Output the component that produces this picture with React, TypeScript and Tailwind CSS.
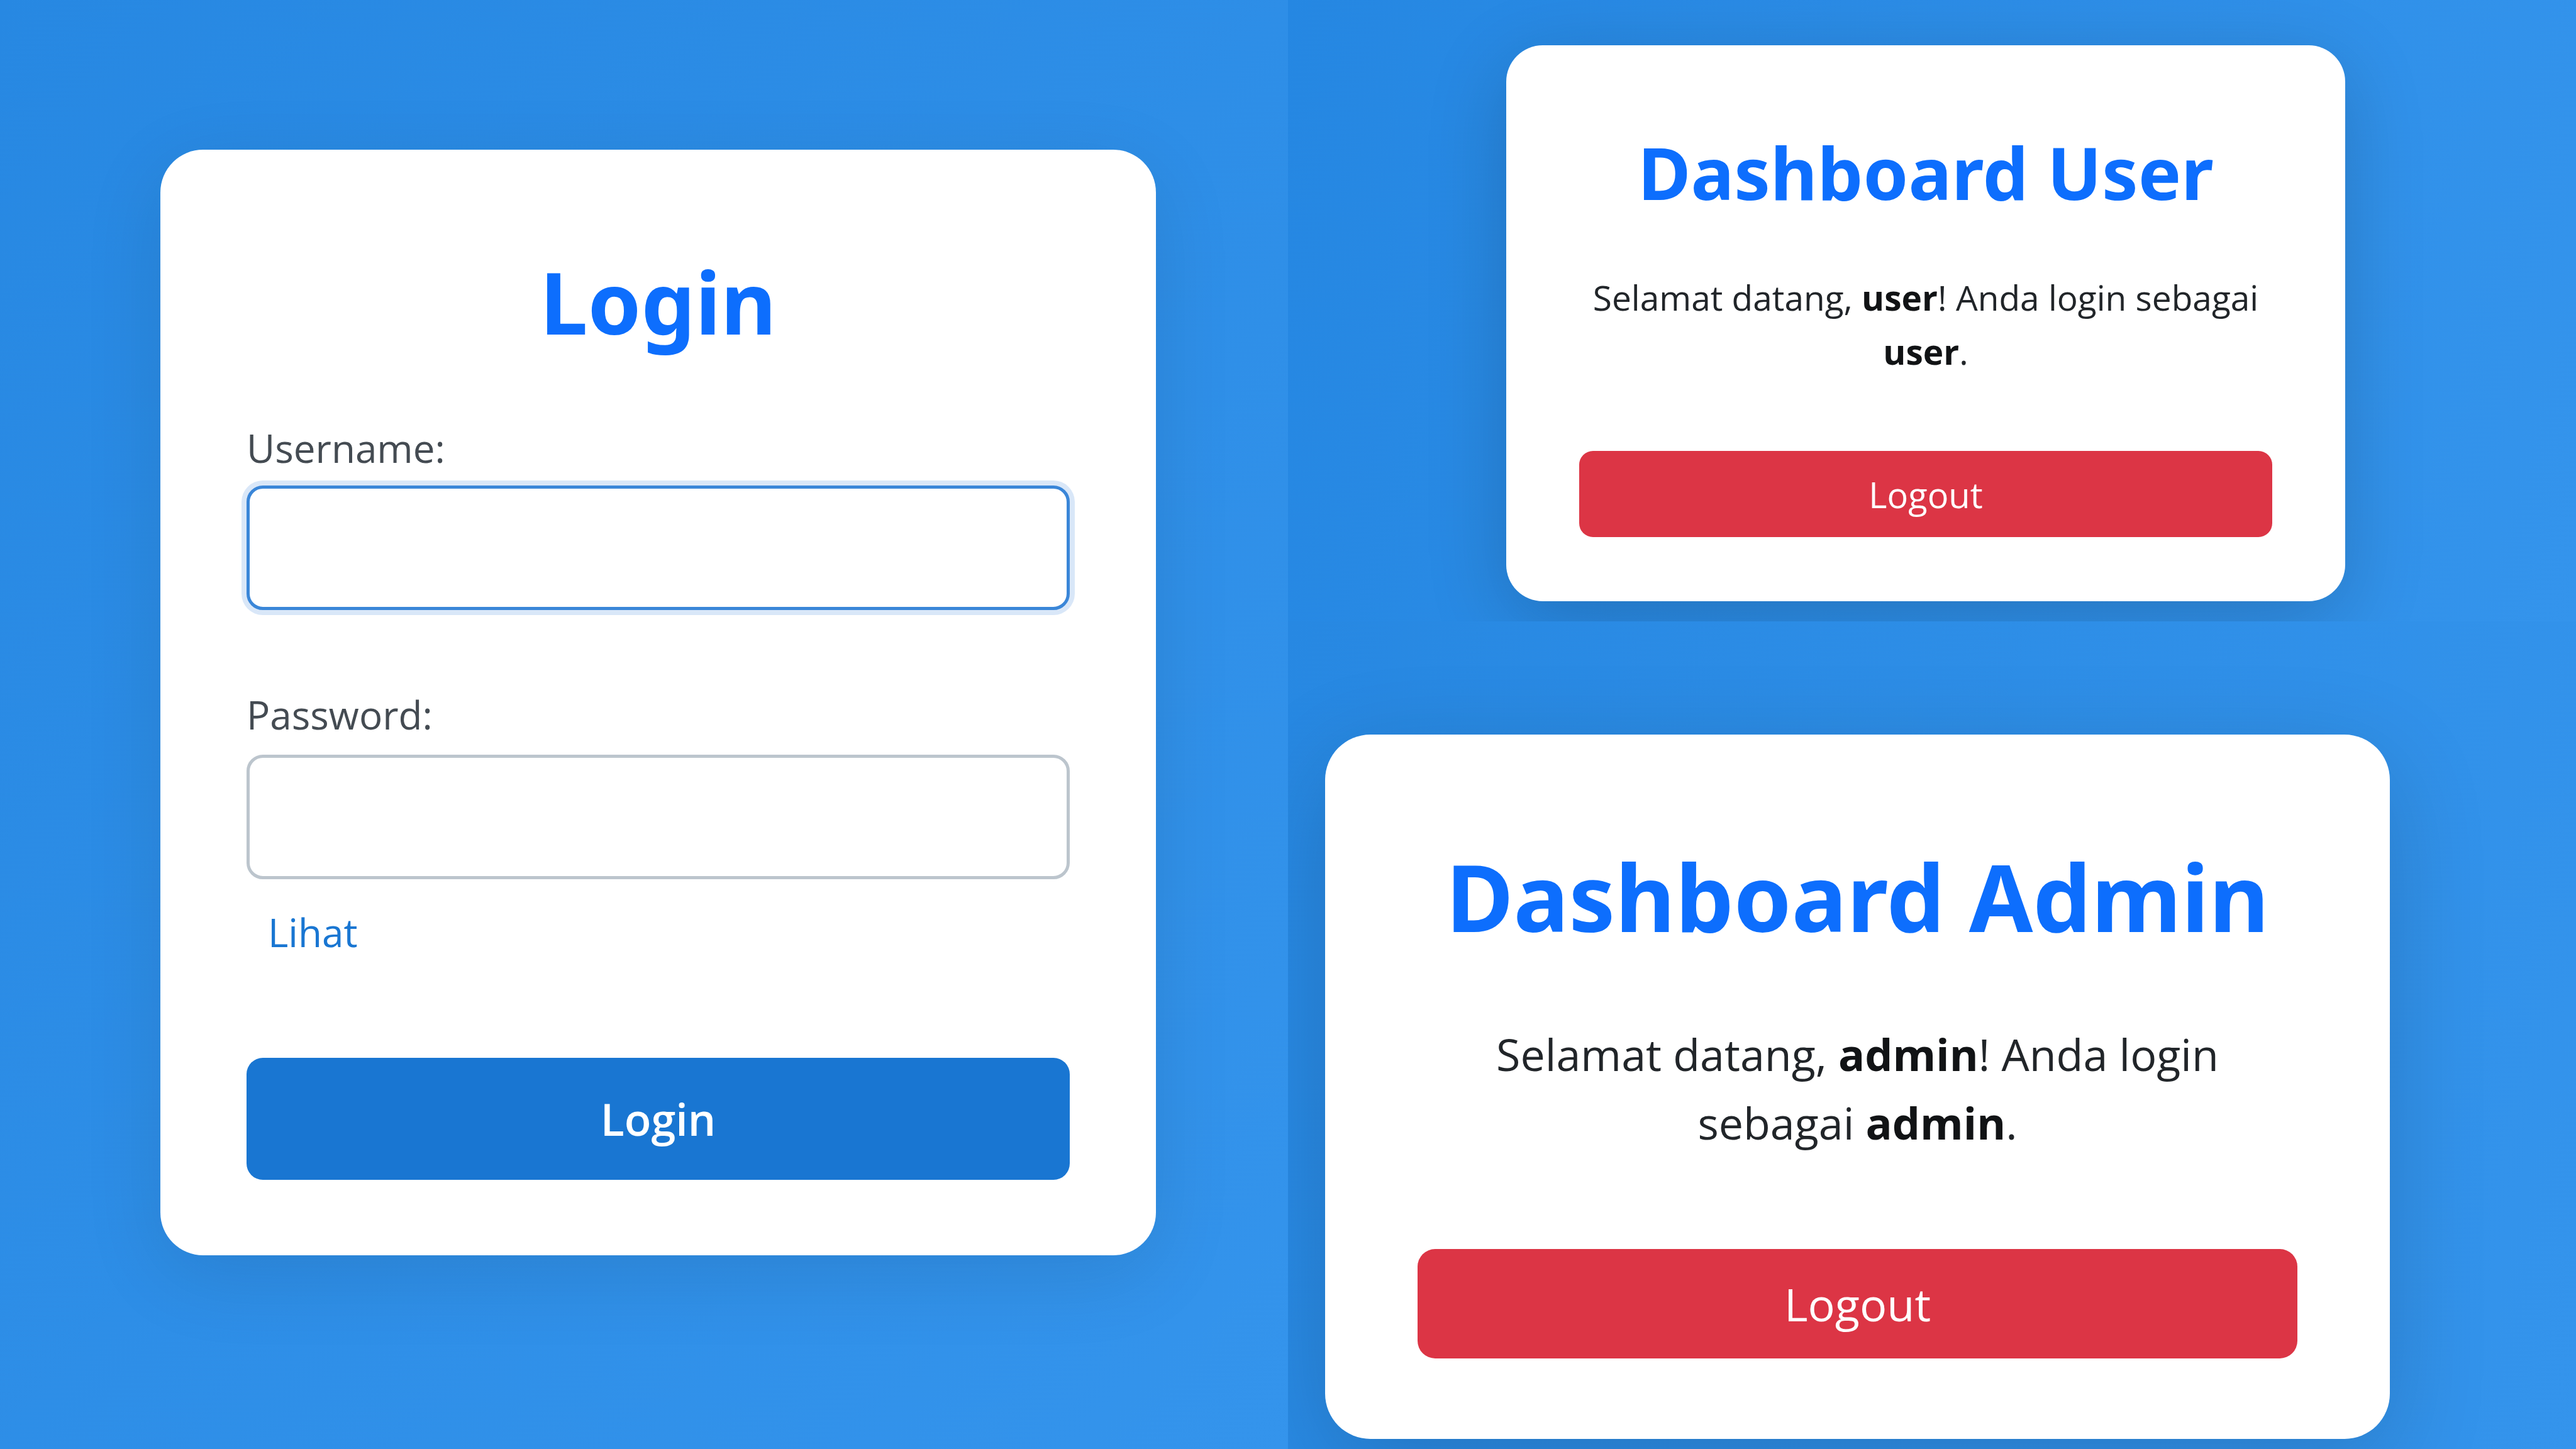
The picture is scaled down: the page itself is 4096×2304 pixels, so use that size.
import React from "react";

type DashboardProps = {
  title: string;
  card: string;
  heading: string;
  text: string;
  button: string;
  children: React.ReactNode;
};

function DashboardCard({ title, card, heading, text, button, children }: DashboardProps) {
  return (
    <section className={`flex flex-col bg-white text-center text-[#212529] ${card}`}>
      <h2 className={`font-['Noto_Sans',sans-serif] font-bold text-[#0d6efd] ${heading}`}>{title}</h2>
      <p className={text}>{children}</p>
      <button type="button" className={`w-full bg-[#dc3545] text-white ${button}`}>
        Logout
      </button>
    </section>
  );
}

function LoginCard() {
  const field =
    "block h-[198px] w-full rounded-[26px] border-[5px] bg-white px-[40px] text-[62px] outline-none";
  return (
    <form className="mt-[238px] ml-[255px] w-[1583px] self-start rounded-[68px] bg-white px-[137px] pt-[160px] pb-[120px] shadow-[0_32px_128px_rgba(0,0,0,0.10)]">
      <h1 className="text-center font-['Noto_Sans',sans-serif] text-[136px] leading-[164px] font-bold text-[#0d6efd]">
        Login
      </h1>
      <label htmlFor="username" className="mt-[102px] block text-[62px] leading-[96px] text-[#444b52]">
        Username:
      </label>
      <input id="username" type="text" className={`mt-[12px] border-[#3a86d8] shadow-[0_0_0_8px_#d9e7f8] ${field}`} />
      <label htmlFor="password" className="mt-[118px] block text-[62px] leading-[96px] text-[#444b52]">
        Password:
      </label>
      <input id="password" type="password" className={`mt-[16px] border-[#bcc5cd] ${field}`} />
      <button type="button" className="mt-[36px] ml-[34px] block text-[62px] leading-[96px] text-[#1976d2]">
        Lihat
      </button>
      <button type="submit" className="mt-[152px] block h-[194px] w-full rounded-[26px] bg-[#1976d2] text-[70px] font-semibold text-white">
        Login
      </button>
    </form>
  );
}

export default function App() {
  return (
    <main className="grid min-h-screen grid-cols-2 overflow-hidden font-['Open_Sans','Noto_Sans',sans-serif]">
      <div className="flex overflow-hidden bg-linear-to-br from-[#2788e2] to-[#3494ec]">
        <LoginCard />
      </div>
      <div className="flex flex-col">
        <div className="flex h-[988px] overflow-hidden bg-linear-105 from-[#2587e2] to-[#3494ec]">
          <DashboardCard
            title="Dashboard User"
            card="mt-[72px] ml-[347px] w-[1334px] self-start rounded-[58px] px-[116px] pt-[132px] pb-[102px] shadow-[0_32px_128px_rgba(0,0,0,0.18)]"
            heading="text-[115px] leading-[140px]"
            text="mt-[86px] text-[55px] leading-[86px]"
            button="mt-[115px] h-[137px] rounded-[22px] text-[56px]"
          >
            Selamat datang, <strong className="text-[#111315]">user</strong>! Anda login sebagai{" "}
            <strong className="text-[#111315]">user</strong>.
          </DashboardCard>
        </div>
        <div className="flex grow overflow-hidden bg-linear-105 from-[#2788e2] to-[#3494ec]">
          <DashboardCard
            title="Dashboard Admin"
            card="mt-[180px] ml-[59px] w-[1693px] self-start rounded-[72px] px-[147px] pt-[168px] pb-[128px] shadow-[0_40px_160px_rgba(0,0,0,0.16)]"
            heading="text-[147px] leading-[178px]"
            text="mt-[108px] text-[70px] leading-[109px]"
            button="mt-[146px] h-[174px] rounded-[28px] text-[72px]"
          >
            Selamat datang, <strong className="text-[#111315]">admin</strong>! Anda login sebagai{" "}
            <strong className="text-[#111315]">admin</strong>.
          </DashboardCard>
        </div>
      </div>
    </main>
  );
}
